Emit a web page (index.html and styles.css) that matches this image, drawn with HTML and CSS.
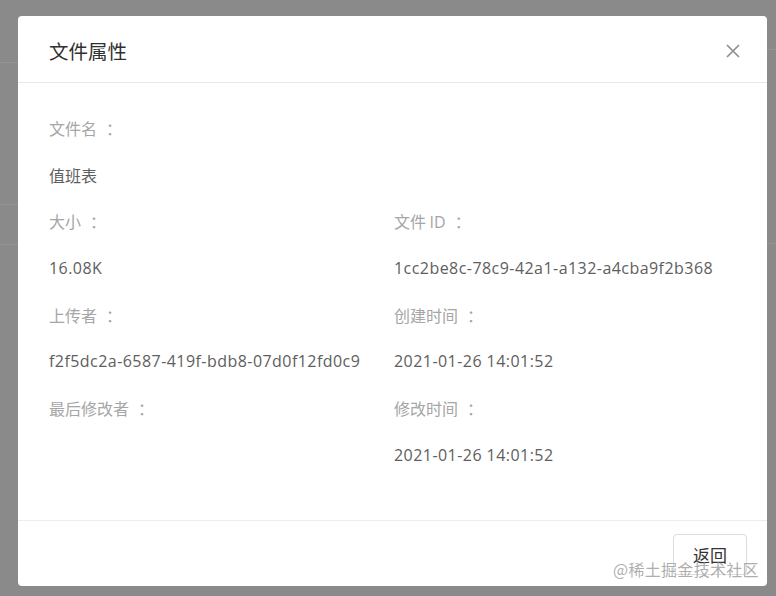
FILE: index.html
```html
<!DOCTYPE html>
<html lang="zh">
<head>
<meta charset="utf-8">
<title>文件属性</title>
<link rel="stylesheet" href="styles.css">
</head>
<body>
<div class="backdrop">
  <div class="bg-line l1"></div>
  <div class="bg-line l2"></div>
  <div class="bg-line l3"></div>
  <div class="bg-line r1"></div>
  <div class="bg-line r2"></div>
  <div class="modal">
    <div class="modal-header">
      <div class="title">文件属性</div>
      <div class="close">
        <svg width="16" height="16" viewBox="0 0 16 16"><path d="M2 2 L14 14 M14 2 L2 14" stroke="#8c8c8c" stroke-width="1.6" fill="none"/></svg>
      </div>
    </div>
    <div class="modal-body">
      <div class="full">
        <div class="label">文件名<span class="colon">：</span></div>
        <div class="value cjk">值班表</div>
      </div>
      <div class="grid">
        <div class="field">
          <div class="label">大小<span class="colon">：</span></div>
          <div class="value">16.08K</div>
        </div>
        <div class="field">
          <div class="label">文件 <span class="latin">ID</span><span class="colon">：</span></div>
          <div class="value">1cc2be8c-78c9-42a1-a132-a4cba9f2b368</div>
        </div>
        <div class="field">
          <div class="label">上传者<span class="colon">：</span></div>
          <div class="value">f2f5dc2a-6587-419f-bdb8-07d0f12fd0c9</div>
        </div>
        <div class="field">
          <div class="label">创建时间<span class="colon">：</span></div>
          <div class="value">2021-01-26 14:01:52</div>
        </div>
        <div class="field">
          <div class="label">最后修改者<span class="colon">：</span></div>
          <div class="value"></div>
        </div>
        <div class="field">
          <div class="label">修改时间<span class="colon">：</span></div>
          <div class="value">2021-01-26 14:01:52</div>
        </div>
      </div>
    </div>
    <div class="modal-footer">
      <button class="btn">返回</button>
    </div>
  </div>
  <div class="watermark">@稀土掘金技术社区</div>
</div>
</body>
</html>
```

FILE: styles.css
```css
html, body {
  margin: 0;
  padding: 0;
}
body {
  width: 776px;
  height: 596px;
  overflow: hidden;
  background: #8a8a8a;
  font-family: "Segoe UI", "Open Sans", "Noto Sans CJK SC", sans-serif;
}
.backdrop {
  position: relative;
  width: 776px;
  height: 596px;
  padding: 16px 9px 10px 18px;
  box-sizing: border-box;
}
.bg-line {
  position: absolute;
  height: 1px;
  background: #949494;
}
.l1 { left: 0; width: 18px; top: 62px; }
.l2 { left: 0; width: 18px; top: 204px; }
.l3 { left: 0; width: 18px; top: 244px; }
.r1 { right: 0; width: 9px; top: 49px; }
.r2 { right: 0; width: 9px; top: 243px; }
.modal {
  position: relative;
  width: 749px;
  height: 570px;
  background: #fff;
  border-radius: 4px;
  display: flex;
  flex-direction: column;
}
.modal-header {
  height: 67px;
  border-bottom: 1px solid #e8e8e8;
  display: flex;
  align-items: center;
  justify-content: space-between;
  padding: 0 26px 0 31px;
  box-sizing: border-box;
  flex-shrink: 0;
}
.title {
  font-family: "Noto Sans CJK SC", sans-serif;
  font-size: 19.5px;
  color: #303030;
  margin-top: 2px;
}
.close {
  display: flex;
  margin-top: 4px;
}
.modal-body {
  flex: 1;
  padding: 22px 31px 0 31px;
  font-size: 16px;
  line-height: 46.7px;
}
.grid {
  display: grid;
  grid-template-columns: 345px 1fr;
}
.label {
  color: #a6a6a6;
  font-family: "Noto Sans CJK SC", sans-serif;
  height: 46.7px;
}
.latin {
  font-family: "Open Sans", sans-serif;
}
.colon {
  margin-left: 9px;
}
.value {
  color: #5e5e5e;
  height: 46.7px;
  white-space: nowrap;
  letter-spacing: 0.45px;
}
.value.cjk {
  font-family: "Noto Sans CJK SC", sans-serif;
  letter-spacing: 0;
}
.modal-footer {
  height: 66px;
  border-top: 1px solid #ececec;
  display: flex;
  align-items: center;
  justify-content: flex-end;
  padding-right: 20px;
  box-sizing: border-box;
  flex-shrink: 0;
}
.btn {
  width: 74px;
  height: 41px;
  background: #fff;
  border: 1px solid #dcdcdc;
  border-radius: 4px;
  font-family: "Noto Sans CJK SC", sans-serif;
  font-size: 17px;
  color: #333;
  padding: 0;
  margin-top: 1px;
}
.watermark {
  position: absolute;
  left: 613px;
  top: 557px;
  font-family: "Noto Sans CJK SC", sans-serif;
  font-size: 16px;
  line-height: 24px;
  color: rgba(160, 160, 160, 0.85);
  letter-spacing: 0.3px;
}
```
